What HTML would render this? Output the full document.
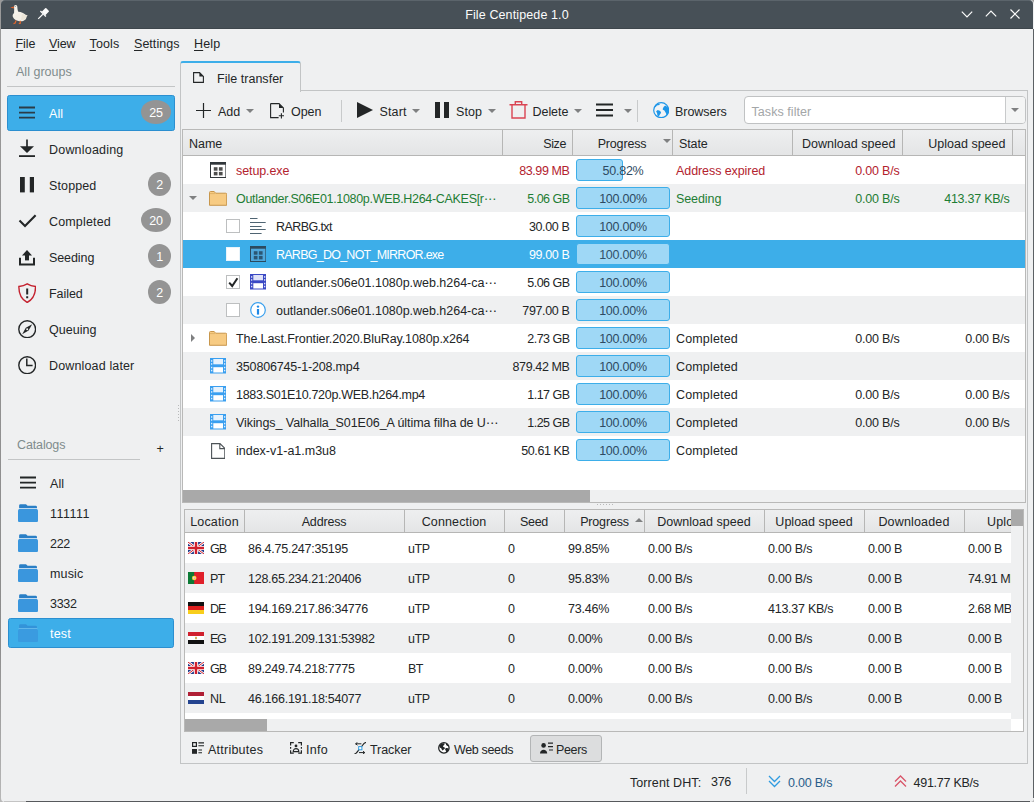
<!DOCTYPE html>
<html><head><meta charset="utf-8"><title>File Centipede 1.0</title>
<style>
html,body{margin:0;padding:0;background:#eff0f1;}
body{width:1034px;height:802px;overflow:hidden;font-family:"Liberation Sans","DejaVu Sans","Noto Sans CJK SC",sans-serif;font-size:12.5px;}
#win{position:relative;width:1034px;height:802px;overflow:hidden;background:#eff0f1;}
#win div,#win span.t,#win svg{position:absolute;box-sizing:border-box;}
.t{line-height:16px;height:16px;white-space:nowrap;font-size:12.5px;}
u{text-decoration:underline;text-underline-offset:2px;}

</style></head><body>
<div id="win">
<div style="left:0px;top:0px;width:1034px;height:802px;background:linear-gradient(#9a9a9a,#8c8c8c 80%,#b8b8b8);"></div>
<div style="left:1px;top:0px;width:1033px;height:802px;background:#eff0f1;border-radius:4px;"></div>
<div style="left:1px;top:0px;width:1032px;height:29px;background:#475057;border-radius:4px 4px 0 0;border-top:1px solid #5b646b;border-bottom:1px solid #3e464c;"></div>
<span class="t" style="left:317px;width:400px;text-align:center;top:7px;color:#fcfcfc;letter-spacing:0.119px;">File Centipede 1.0</span>
<svg style="left:960px;top:8px" width="14" height="12" viewBox="0 0 14 12"><path d="M1.8 3.6 L7 8.8 L12.2 3.6" fill="none" stroke="#fcfcfc" stroke-width="1.2"/></svg>
<svg style="left:984px;top:8px" width="14" height="12" viewBox="0 0 14 12"><path d="M1.8 8.4 L7 3.2 L12.2 8.4" fill="none" stroke="#fcfcfc" stroke-width="1.2"/></svg>
<svg style="left:1009px;top:8px" width="12" height="12" viewBox="0 0 12 12"><path d="M1.5 1.5 L10.5 10.5 M10.5 1.5 L1.5 10.5" fill="none" stroke="#fcfcfc" stroke-width="1.2"/></svg>
<svg style="left:9px;top:3px" width="20" height="22" viewBox="0 0 20 22"><ellipse cx="10.5" cy="13.5" rx="7" ry="4.6" fill="#f3efe6" transform="rotate(12 10.5 13.5)"/>
<path d="M5 3.5 C5 1.5 8 1.2 8.3 3.5 C8.5 6 8.6 8 10 10 L5.5 13 C4.5 10 5.6 7 5 3.5Z" fill="#f6f3ec"/>
<path d="M13 11 L18.6 12.2 L16 16.5 L12 17Z" fill="#ebe5d8"/>
<path d="M1.2 4.6 L4.9 3.6 L4.9 5.6 Z" fill="#e8622a"/>
<path d="M7 17.5 L6.2 20 L4.5 20.6 M11.3 17.8 L11.3 20.2 L9.8 20.6" stroke="#e0652c" stroke-width="1.2" fill="none"/>
<circle cx="6.2" cy="3.3" r="0.5" fill="#555"/></svg>
<svg style="left:37px;top:7px" width="13" height="13" viewBox="0 0 13 13"><g transform="rotate(45 6.5 6.5)"><rect x="4" y="0.8" width="5" height="5.8" rx="0.8" fill="#fcfcfc"/><rect x="2.6" y="6.3" width="7.8" height="1.3" fill="#fcfcfc"/><rect x="6" y="7.5" width="1.1" height="6.5" fill="#fcfcfc"/></g></svg>
<span class="t" style="left:15.5px;top:36px;color:#232627;letter-spacing:-0.043px;"><u>F</u>ile</span>
<span class="t" style="left:49px;top:36px;color:#232627;letter-spacing:-0.086px;"><u>V</u>iew</span>
<span class="t" style="left:89.5px;top:36px;color:#232627;letter-spacing:0.141px;"><u>T</u>ools</span>
<span class="t" style="left:134px;top:36px;color:#232627;letter-spacing:0.035px;"><u>S</u>ettings</span>
<span class="t" style="left:194px;top:36px;color:#232627;letter-spacing:0.133px;"><u>H</u>elp</span>
<span class="t" style="left:16px;top:64px;color:#7f8c8d;letter-spacing:0.013px;">All groups</span>
<div style="left:7px;top:86px;width:168px;height:1px;background:#c3c5c6;"></div>
<div style="left:7px;top:95px;width:168px;height:36px;background:#3daee9;border:1px solid #2b8fd0;border-radius:2.5px;"></div>
<svg style="left:19px;top:106px" width="16.4" height="13" viewBox="0 0 16.4 13"><path d="M0 1.5H16.4M0 6.6H16.4M0 11.7H16.4" stroke="#2b3c48" stroke-width="1.8"/></svg>
<span class="t" style="left:49px;top:106px;color:#ffffff;letter-spacing:0.073px;">All</span>
<div style="left:141px;top:100px;width:30px;height:24px;background:#949494;border-radius:50%;"></div>
<span class="t" style="left:-44.0px;width:400px;text-align:center;top:104.5px;color:#ffffff;letter-spacing:-0.289px;">25</span>
<span class="t" style="left:49px;top:142px;color:#232627;letter-spacing:0.202px;">Downloading</span>
<span class="t" style="left:49px;top:178px;color:#232627;letter-spacing:0.121px;">Stopped</span>
<div style="left:148px;top:172px;width:23px;height:24px;background:#949494;border-radius:50%;"></div>
<span class="t" style="left:-40.5px;width:400px;text-align:center;top:176.5px;color:#ffffff;letter-spacing:-0.281px;">2</span>
<span class="t" style="left:49px;top:214px;color:#232627;letter-spacing:0.155px;">Completed</span>
<div style="left:141px;top:208px;width:30px;height:24px;background:#949494;border-radius:50%;"></div>
<span class="t" style="left:-44.0px;width:400px;text-align:center;top:212.5px;color:#ffffff;letter-spacing:-0.289px;">20</span>
<span class="t" style="left:49px;top:250px;color:#232627;letter-spacing:-0.085px;">Seeding</span>
<div style="left:148px;top:244px;width:23px;height:24px;background:#949494;border-radius:50%;"></div>
<span class="t" style="left:-40.5px;width:400px;text-align:center;top:248.5px;color:#ffffff;letter-spacing:-0.281px;">1</span>
<span class="t" style="left:49px;top:286px;color:#232627;letter-spacing:-0.052px;">Failed</span>
<div style="left:148px;top:280px;width:23px;height:24px;background:#949494;border-radius:50%;"></div>
<span class="t" style="left:-40.5px;width:400px;text-align:center;top:284.5px;color:#ffffff;letter-spacing:-0.281px;">2</span>
<span class="t" style="left:49px;top:322px;color:#232627;letter-spacing:0.036px;">Queuing</span>
<span class="t" style="left:49px;top:358px;color:#232627;letter-spacing:0.146px;">Download later</span>
<svg style="left:19px;top:139px" width="16" height="19" viewBox="0 0 16 19"><path d="M8 0.4V9" stroke="#232627" stroke-width="1.7"/><path d="M1 7.2 H15 L8 14Z" fill="#232627"/><path d="M0 17.1H16" stroke="#232627" stroke-width="1.8"/></svg>
<svg style="left:19.7px;top:177.2px" width="14.6" height="15.4" viewBox="0 0 14.6 15.4"><rect x="0" y="0" width="4.8" height="15.4" fill="#232627"/><rect x="9.8" y="0" width="4.8" height="15.4" fill="#232627"/></svg>
<svg style="left:17.5px;top:213px" width="19" height="15" viewBox="0 0 19 15"><path d="M1.5 7.6 L7 13 L17.6 2.2" fill="none" stroke="#232627" stroke-width="2.1"/></svg>
<svg style="left:19px;top:249.5px" width="16" height="16" viewBox="0 0 16 16"><path d="M8 0 L13 5.4 H3Z" fill="#232627"/><rect x="6" y="5" width="4" height="5.4" fill="#232627"/><path d="M1 7.8V14.4H15V7.8" fill="none" stroke="#232627" stroke-width="2"/></svg>
<svg style="left:17.9px;top:282.8px" width="18.4" height="20.4" viewBox="0 0 18.4 20.4"><path d="M9.2 0.9 C6.6 2.6 4 3.3 0.9 3.5 C0.7 11 2.6 16 9.2 19.5 C15.8 16 17.7 11 17.5 3.5 C14.4 3.3 11.8 2.6 9.2 0.9Z" fill="none" stroke="#c4222f" stroke-width="1.4"/><path d="M9.2 5.4V11.6M9.2 13.2V15.2" stroke="#232627" stroke-width="2"/></svg>
<svg style="left:17.9px;top:319.8px" width="18.4" height="18.4" viewBox="0 0 18.4 18.4"><circle cx="9.2" cy="9.2" r="8.4" fill="none" stroke="#232627" stroke-width="1.4"/><path d="M14.2 4.2 L10.6 10.6 L4.2 14.2 L7.8 7.8Z" fill="#232627"/><circle cx="9.2" cy="9.2" r="1" fill="#eff0f1"/></svg>
<svg style="left:17.9px;top:355.8px" width="18.4" height="18.4" viewBox="0 0 18.4 18.4"><circle cx="9.2" cy="9.2" r="8.4" fill="none" stroke="#232627" stroke-width="1.4"/><path d="M8.8 2.4V9.6H14.6" fill="none" stroke="#232627" stroke-width="1.5"/></svg>
<span class="t" style="left:17px;top:437px;color:#7f8c8d;letter-spacing:-0.131px;">Catalogs</span>
<span class="t" style="left:156.5px;top:441px;color:#232627;letter-spacing:-0.641px;">+</span>
<div style="left:8px;top:459px;width:132px;height:1px;background:#c3c5c6;"></div>
<svg style="left:20px;top:476px" width="16.4" height="13" viewBox="0 0 16.4 13"><path d="M0 1.5H16.4M0 6.6H16.4M0 11.7H16.4" stroke="#232627" stroke-width="1.8"/></svg>
<div style="left:8px;top:618px;width:166px;height:30px;background:#3daee9;border:1px solid #2b8fd0;border-radius:2.5px;"></div>
<span class="t" style="left:50px;top:476px;color:#232627;letter-spacing:0.073px;">All</span>
<span class="t" style="left:50px;top:506px;color:#232627;letter-spacing:0.482px;">111111</span>
<svg style="left:18px;top:503.8px" width="20" height="18.2" viewBox="0 0 20 18.2"><path d="M1.1 1.6 Q1.1 0.2 2.5 0.2 H8 L9.6 1.8 H17.6 Q19 1.8 19 3.2 V6 H1.1Z" fill="#2a7fc6"/><rect x="0.6" y="4.2" width="18.8" height="1.2" fill="#e4eff9"/><rect x="0" y="5" width="20" height="13.2" rx="1.6" fill="#3a96dd"/></svg>
<span class="t" style="left:50px;top:536px;color:#232627;letter-spacing:-0.292px;">222</span>
<svg style="left:18px;top:533.8px" width="20" height="18.2" viewBox="0 0 20 18.2"><path d="M1.1 1.6 Q1.1 0.2 2.5 0.2 H8 L9.6 1.8 H17.6 Q19 1.8 19 3.2 V6 H1.1Z" fill="#2a7fc6"/><rect x="0.6" y="4.2" width="18.8" height="1.2" fill="#e4eff9"/><rect x="0" y="5" width="20" height="13.2" rx="1.6" fill="#3a96dd"/></svg>
<span class="t" style="left:50px;top:566px;color:#232627;letter-spacing:0.156px;">music</span>
<svg style="left:18px;top:563.8px" width="20" height="18.2" viewBox="0 0 20 18.2"><path d="M1.1 1.6 Q1.1 0.2 2.5 0.2 H8 L9.6 1.8 H17.6 Q19 1.8 19 3.2 V6 H1.1Z" fill="#2a7fc6"/><rect x="0.6" y="4.2" width="18.8" height="1.2" fill="#e4eff9"/><rect x="0" y="5" width="20" height="13.2" rx="1.6" fill="#3a96dd"/></svg>
<span class="t" style="left:50px;top:596px;color:#232627;letter-spacing:-0.293px;">3332</span>
<svg style="left:18px;top:593.8px" width="20" height="18.2" viewBox="0 0 20 18.2"><path d="M1.1 1.6 Q1.1 0.2 2.5 0.2 H8 L9.6 1.8 H17.6 Q19 1.8 19 3.2 V6 H1.1Z" fill="#2a7fc6"/><rect x="0.6" y="4.2" width="18.8" height="1.2" fill="#e4eff9"/><rect x="0" y="5" width="20" height="13.2" rx="1.6" fill="#3a96dd"/></svg>
<span class="t" style="left:50px;top:626px;color:#ffffff;letter-spacing:0.180px;">test</span>
<svg style="left:18px;top:623.8px" width="20" height="18.2" viewBox="0 0 20 18.2"><path d="M1.1 1.6 Q1.1 0.2 2.5 0.2 H8 L9.6 1.8 H17.6 Q19 1.8 19 3.2 V6 H1.1Z" fill="#3393d9"/><rect x="0.6" y="4.2" width="18.8" height="1.2" fill="#6fc0ee"/><rect x="0" y="5" width="20" height="13.2" rx="1.6" fill="#3a9be0"/></svg>
<div style="left:178px;top:405px;width:1px;height:1px;background:#b8b9ba;"></div>
<div style="left:178px;top:408px;width:1px;height:1px;background:#b8b9ba;"></div>
<div style="left:178px;top:411px;width:1px;height:1px;background:#b8b9ba;"></div>
<div style="left:178px;top:414px;width:1px;height:1px;background:#b8b9ba;"></div>
<div style="left:178px;top:417px;width:1px;height:1px;background:#b8b9ba;"></div>
<div style="left:178px;top:420px;width:1px;height:1px;background:#b8b9ba;"></div>
<div style="left:180px;top:90px;width:848px;height:674px;border:1px solid #c2c4c5;background:#eff0f1;"></div>
<div style="left:180px;top:61px;width:121px;height:31px;background:#eff0f1;border:1px solid #c2c4c5;border-bottom:none;border-top:2px solid #3daee9;border-radius:3px 3px 0 0;"></div>
<svg style="left:193px;top:72px" width="11" height="11" viewBox="0 0 11 11"><path d="M0.6 0.6 H6.6 L10.4 4.4 V10.4 H0.6Z" fill="none" stroke="#232627" stroke-width="1.1"/><path d="M6.4 0.6 L10.4 4.6 H6.4Z" fill="#232627"/></svg>
<span class="t" style="left:217px;top:71px;color:#232627;letter-spacing:0.023px;">File transfer</span>
<svg style="left:196px;top:103px" width="15" height="15" viewBox="0 0 15 15"><path d="M7.5 0V15M0 7.5H15" stroke="#232627" stroke-width="1.2"/></svg>
<span class="t" style="left:218px;top:103.5px;color:#232627;letter-spacing:-0.021px;">Add</span>
<svg style="left:246px;top:108.5px" width="8" height="4" viewBox="0 0 8 4"><path d="M0 0H8L4 4Z" fill="#7f8081"/></svg>
<svg style="left:270px;top:102.5px" width="15" height="16" viewBox="0 0 15 16"><path d="M0.6 0.6 H9 L13.4 5 V9.6 M8.6 14.6 H0.6 V0.6" fill="none" stroke="#232627" stroke-width="1.1"/><path d="M9 0.6 L13.4 5 H9Z" fill="#232627"/><path d="M11.4 10.2V15.4M8.8 12.8H14" stroke="#232627" stroke-width="1.1"/></svg>
<span class="t" style="left:291px;top:103.5px;color:#232627;letter-spacing:-0.070px;">Open</span>
<div style="left:341px;top:100px;width:1px;height:22px;background:#c8cacb;"></div>
<svg style="left:357px;top:102px" width="16" height="16" viewBox="0 0 16 16"><path d="M0 0 L16 8 L0 16Z" fill="#232627"/></svg>
<span class="t" style="left:379.5px;top:103.5px;color:#232627;letter-spacing:0.122px;">Start</span>
<svg style="left:412px;top:108.5px" width="8" height="4" viewBox="0 0 8 4"><path d="M0 0H8L4 4Z" fill="#7f8081"/></svg>
<svg style="left:435px;top:102px" width="14" height="16" viewBox="0 0 14 16"><rect x="0" y="0" width="5" height="16" fill="#232627"/><rect x="9" y="0" width="5" height="16" fill="#232627"/></svg>
<span class="t" style="left:456px;top:103.5px;color:#232627;letter-spacing:0.043px;">Stop</span>
<svg style="left:487.5px;top:108.5px" width="8" height="4" viewBox="0 0 8 4"><path d="M0 0H8L4 4Z" fill="#7f8081"/></svg>
<svg style="left:509px;top:101px" width="19" height="18" viewBox="0 0 19 18"><path d="M0.5 3.8H18.5M6.3 3.5V0.8H12.7V3.5M3 4V17H16V4" fill="none" stroke="#da4453" stroke-width="1.4"/></svg>
<span class="t" style="left:532.5px;top:103.5px;color:#232627;letter-spacing:-0.052px;">Delete</span>
<svg style="left:573.5px;top:108.5px" width="8" height="4" viewBox="0 0 8 4"><path d="M0 0H8L4 4Z" fill="#7f8081"/></svg>
<svg style="left:595.5px;top:102.5px" width="17" height="14" viewBox="0 0 17 14"><path d="M0 1.5H17M0 7H17M0 12.5H17" stroke="#232627" stroke-width="2"/></svg>
<svg style="left:623.5px;top:108.5px" width="8" height="4" viewBox="0 0 8 4"><path d="M0 0H8L4 4Z" fill="#7f8081"/></svg>
<div style="left:637px;top:100px;width:1px;height:22px;background:#c8cacb;"></div>
<svg style="left:652.8px;top:101.8px" width="16.4" height="16.4" viewBox="0 0 16.4 16.4"><circle cx="8.2" cy="8.2" r="7.5" fill="#f1f4f6" stroke="#1e96e8" stroke-width="1.2"/><path d="M1.6 5 L2.6 3 L4.8 1.7 L7 1.9 L6.2 2.9 L3.9 3.6 L2.6 5.2Z M9.7 7 L10.6 5 L12.2 3.5 L13.7 4.6 L15.3 5.8 L15.9 8.9 L15.3 11.6 L13.7 13.9 L13 11.2 L11.4 8.5 L9.9 7.7Z M3.1 9.3 L4.8 8.1 L7.2 9.1 L8.1 10.8 L6.8 12.8 L5.6 14.7 L4.4 13.5 L4.1 11.2Z" fill="#1e96e8"/></svg>
<span class="t" style="left:675px;top:103.5px;color:#232627;letter-spacing:-0.043px;">Browsers</span>
<div style="left:744px;top:96px;width:282px;height:28px;background:#ffffff;border:1px solid #c0c2c3;border-radius:4px;"></div>
<div style="left:1005px;top:97px;width:1px;height:26px;background:#c8cacb;"></div>
<div style="left:1006px;top:97px;width:19px;height:26px;background:#f4f5f5;border-radius:0 3px 3px 0;"></div>
<span class="t" style="left:751.5px;top:103.5px;color:#a3a6a8;letter-spacing:0.061px;">Tasks filter</span>
<svg style="left:1010.5px;top:108px" width="8" height="4" viewBox="0 0 8 4"><path d="M0 0H8L4 4Z" fill="#7f8081"/></svg>
<div style="left:182px;top:129px;width:844px;height:374px;border:1px solid #b9b9b8;background:#ffffff;"></div>
<div style="left:183px;top:130px;width:842px;height:25.5px;background:linear-gradient(#eeeff0,#e4e5e6);border-bottom:1px solid #b6b6b5;"></div>
<div style="left:502px;top:130px;width:1px;height:25px;background:#b6b6b5;"></div>
<div style="left:572px;top:130px;width:1px;height:25px;background:#b6b6b5;"></div>
<div style="left:672px;top:130px;width:1px;height:25px;background:#b6b6b5;"></div>
<div style="left:792px;top:130px;width:1px;height:25px;background:#b6b6b5;"></div>
<div style="left:902px;top:130px;width:1px;height:25px;background:#b6b6b5;"></div>
<div style="left:1012px;top:130px;width:1px;height:25px;background:#b6b6b5;"></div>
<span class="t" style="left:189px;top:135.5px;color:#232627;letter-spacing:-0.035px;">Name</span>
<span class="t" style="right:468px;top:135.5px;color:#232627;letter-spacing:-0.414px;">Size</span>
<span class="t" style="left:422px;width:400px;text-align:center;top:135.5px;color:#232627;letter-spacing:-0.182px;">Progress</span>
<svg style="left:663px;top:139px" width="8" height="4" viewBox="0 0 8 4"><path d="M0 0H8L4 4Z" fill="#7f8081"/></svg>
<span class="t" style="left:679px;top:135.5px;color:#232627;letter-spacing:-0.109px;">State</span>
<span class="t" style="right:138.5px;top:135.5px;color:#232627;letter-spacing:0.033px;">Download speed</span>
<span class="t" style="right:28.5px;top:135.5px;color:#232627;letter-spacing:0.009px;">Upload speed</span>
<svg style="left:209.7px;top:162.3px" width="16.4" height="16" viewBox="0 0 16.4 16"><rect x="0.5" y="0.5" width="15.4" height="15" fill="#ffffff" stroke="#31363b" stroke-width="1"/><rect x="0.5" y="0.5" width="15.4" height="2.2" fill="#31363b"/><rect x="3.8" y="5.2" width="3.7" height="3.5" fill="#4d4d4d"/><rect x="8.9" y="5.2" width="3.7" height="3.5" fill="#4d4d4d"/><rect x="3.8" y="9.9" width="3.7" height="3.5" fill="#4d4d4d"/><rect x="8.9" y="9.9" width="3.7" height="3.5" fill="#4d4d4d"/></svg>
<span class="t" style="left:236px;top:163px;color:#b3222e;letter-spacing:-0.092px;">setup.exe</span>
<span class="t" style="right:464.5px;top:163px;color:#b3222e;letter-spacing:-0.402px;">83.99 MB</span>
<div style="left:576px;top:159px;width:46.7px;height:22px;background:#9fd8f6;border:1px solid #3daee9;border-radius:3px;"></div>
<span class="t" style="left:423px;width:400px;text-align:center;top:163px;color:#2e4a62;letter-spacing:-0.229px;">50.82%</span>
<span class="t" style="left:676px;top:163px;color:#b3222e;letter-spacing:-0.078px;">Address expired</span>
<span class="t" style="right:134.5px;top:163px;color:#b3222e;letter-spacing:-0.207px;">0.00 B/s</span>
<div style="left:183px;top:184px;width:842px;height:28px;background:#eff0f1;"></div>
<svg style="left:189px;top:196px" width="8" height="4" viewBox="0 0 8 4"><path d="M0 0H8L4 4Z" fill="#7f8081"/></svg>
<svg style="left:209.0px;top:190.6px" width="18.2" height="15" viewBox="0 0 18.2 15"><path d="M0.5 14.3 V1.5 Q0.5 0.5 1.5 0.5 H5.2 L6.6 2.2 H16.7 Q17.7 2.2 17.7 3.2 V14.3Z" fill="#f7cb83" stroke="#c8964a" stroke-width="1"/><path d="M0.8 2.6 H6" stroke="#d9a95a" stroke-width="0.7" fill="none"/></svg>
<span class="t" style="left:236px;top:191px;color:#1e7d34;letter-spacing:-0.313px;">Outlander.S06E01.1080p.WEB.H264-CAKES[r⋯</span>
<span class="t" style="right:464.5px;top:191px;color:#1e7d34;letter-spacing:-0.529px;">5.06 GB</span>
<div style="left:576px;top:187px;width:94px;height:22px;background:#9fd8f6;border:1px solid #3daee9;border-radius:3px;"></div>
<span class="t" style="left:423px;width:400px;text-align:center;top:191px;color:#2e4a62;letter-spacing:-0.237px;">100.00%</span>
<span class="t" style="left:676px;top:191px;color:#1e7d34;letter-spacing:-0.085px;">Seeding</span>
<span class="t" style="right:134.5px;top:191px;color:#1e7d34;letter-spacing:-0.207px;">0.00 B/s</span>
<span class="t" style="right:24.5px;top:191px;color:#1e7d34;letter-spacing:-0.257px;">413.37 KB/s</span>
<div style="left:226px;top:219px;width:14px;height:14px;background:#ffffff;border:1px solid #bdbfc0;"></div>
<svg style="left:250.0px;top:218px" width="16" height="16" viewBox="0 0 16 16"><path d="M0 0.5H7.5M0 4.5H15.7M0 8.5H11.6M0 11.5H15.7M0 15.5H11.6" stroke="#4f6472" stroke-width="1"/></svg>
<span class="t" style="left:276px;top:219px;color:#232627;letter-spacing:-0.585px;">RARBG.txt</span>
<span class="t" style="right:464.5px;top:219px;color:#232627;letter-spacing:-0.362px;">30.00 B</span>
<div style="left:576px;top:215px;width:94px;height:22px;background:#9fd8f6;border:1px solid #3daee9;border-radius:3px;"></div>
<span class="t" style="left:423px;width:400px;text-align:center;top:219px;color:#2e4a62;letter-spacing:-0.237px;">100.00%</span>
<div style="left:183px;top:240px;width:842px;height:28px;background:#3daee9;"></div>
<div style="left:226px;top:247px;width:14px;height:14px;background:#ffffff;border:1px solid #e8f4fb;"></div>
<svg style="left:249.7px;top:246.3px" width="16.4" height="16" viewBox="0 0 16.4 16"><rect x="0.5" y="0.5" width="15.4" height="15" fill="#4fa8dc" stroke="#2c4a5e" stroke-width="1"/><rect x="0.5" y="0.5" width="15.4" height="2.2" fill="#2c4a5e"/><rect x="3.8" y="5.2" width="3.7" height="3.5" fill="#2b5673"/><rect x="8.9" y="5.2" width="3.7" height="3.5" fill="#2b5673"/><rect x="3.8" y="9.9" width="3.7" height="3.5" fill="#2b5673"/><rect x="8.9" y="9.9" width="3.7" height="3.5" fill="#2b5673"/></svg>
<span class="t" style="left:276px;top:247px;color:#ffffff;letter-spacing:-0.749px;">RARBG_DO_NOT_MIRROR.exe</span>
<span class="t" style="right:464.5px;top:247px;color:#ffffff;letter-spacing:-0.362px;">99.00 B</span>
<div style="left:576px;top:243px;width:94px;height:22px;background:#9fd8f6;border:1px solid #3daee9;border-radius:3px;"></div>
<span class="t" style="left:423px;width:400px;text-align:center;top:247px;color:#31516b;letter-spacing:-0.237px;">100.00%</span>
<div style="left:226px;top:275px;width:14px;height:14px;background:#ffffff;border:1px solid #bdbfc0;"></div>
<svg style="left:228px;top:276.5px" width="11" height="11" viewBox="0 0 11 11"><path d="M1.2 5.6 L4.2 9 L9.4 1.2" fill="none" stroke="#232627" stroke-width="2"/></svg>
<svg style="left:249.7px;top:274.4px" width="16.3" height="15.5" viewBox="0 0 16.3 15.5"><rect x="0" y="0" width="16.3" height="15.5" fill="#3b49c4"/><rect x="3.3" y="1" width="9.7" height="5.3" fill="#dfe2f7"/><rect x="3.3" y="9.2" width="9.7" height="5.3" fill="#ffffff"/><rect x="1.0" y="2.2" width="1.3" height="1.5" fill="#ffffff" opacity="0.85"/><rect x="1.0" y="5.2" width="1.3" height="1.5" fill="#ffffff" opacity="0.85"/><rect x="1.0" y="8.8" width="1.3" height="1.5" fill="#ffffff" opacity="0.85"/><rect x="1.0" y="11.8" width="1.3" height="1.5" fill="#ffffff" opacity="0.85"/><rect x="14.0" y="2.2" width="1.3" height="1.5" fill="#ffffff" opacity="0.85"/><rect x="14.0" y="5.2" width="1.3" height="1.5" fill="#ffffff" opacity="0.85"/><rect x="14.0" y="8.8" width="1.3" height="1.5" fill="#ffffff" opacity="0.85"/><rect x="14.0" y="11.8" width="1.3" height="1.5" fill="#ffffff" opacity="0.85"/></svg>
<span class="t" style="left:276px;top:275px;color:#232627;letter-spacing:-0.025px;">outlander.s06e01.1080p.web.h264-ca⋯</span>
<span class="t" style="right:464.5px;top:275px;color:#232627;letter-spacing:-0.529px;">5.06 GB</span>
<div style="left:576px;top:271px;width:94px;height:22px;background:#9fd8f6;border:1px solid #3daee9;border-radius:3px;"></div>
<span class="t" style="left:423px;width:400px;text-align:center;top:275px;color:#2e4a62;letter-spacing:-0.237px;">100.00%</span>
<div style="left:183px;top:296px;width:842px;height:28px;background:#eff0f1;"></div>
<div style="left:226px;top:303px;width:14px;height:14px;background:#ffffff;border:1px solid #bdbfc0;"></div>
<svg style="left:250.0px;top:302.3px" width="16" height="16" viewBox="0 0 16 16"><circle cx="8" cy="8" r="7.3" fill="#ffffff" stroke="#3aa0ee" stroke-width="1.2"/><path d="M8 7V12.6" stroke="#1e88e5" stroke-width="2.2"/><circle cx="8" cy="4.6" r="1.2" fill="#1e88e5"/></svg>
<span class="t" style="left:276px;top:303px;color:#232627;letter-spacing:-0.025px;">outlander.s06e01.1080p.web.h264-ca⋯</span>
<span class="t" style="right:464.5px;top:303px;color:#232627;letter-spacing:-0.354px;">797.00 B</span>
<div style="left:576px;top:299px;width:94px;height:22px;background:#9fd8f6;border:1px solid #3daee9;border-radius:3px;"></div>
<span class="t" style="left:423px;width:400px;text-align:center;top:303px;color:#2e4a62;letter-spacing:-0.237px;">100.00%</span>
<svg style="left:191px;top:334px" width="4" height="8" viewBox="0 0 4 8"><path d="M0 0V8L4 4Z" fill="#7f8081"/></svg>
<svg style="left:209.0px;top:330.6px" width="18.2" height="15" viewBox="0 0 18.2 15"><path d="M0.5 14.3 V1.5 Q0.5 0.5 1.5 0.5 H5.2 L6.6 2.2 H16.7 Q17.7 2.2 17.7 3.2 V14.3Z" fill="#f7cb83" stroke="#c8964a" stroke-width="1"/><path d="M0.8 2.6 H6" stroke="#d9a95a" stroke-width="0.7" fill="none"/></svg>
<span class="t" style="left:236px;top:331px;color:#232627;letter-spacing:-0.099px;">The.Last.Frontier.2020.BluRay.1080p.x264</span>
<span class="t" style="right:464.5px;top:331px;color:#232627;letter-spacing:-0.529px;">2.73 GB</span>
<div style="left:576px;top:327px;width:94px;height:22px;background:#9fd8f6;border:1px solid #3daee9;border-radius:3px;"></div>
<span class="t" style="left:423px;width:400px;text-align:center;top:331px;color:#2e4a62;letter-spacing:-0.237px;">100.00%</span>
<span class="t" style="left:676px;top:331px;color:#232627;letter-spacing:0.155px;">Completed</span>
<span class="t" style="right:134.5px;top:331px;color:#232627;letter-spacing:-0.207px;">0.00 B/s</span>
<span class="t" style="right:24.5px;top:331px;color:#232627;letter-spacing:-0.207px;">0.00 B/s</span>
<div style="left:183px;top:352px;width:842px;height:28px;background:#eff0f1;"></div>
<svg style="left:209.7px;top:358.4px" width="16.3" height="15.5" viewBox="0 0 16.3 15.5"><rect x="0" y="0" width="16.3" height="15.5" fill="#3a9ff0"/><rect x="3.3" y="1" width="9.7" height="5.3" fill="#e6f2fd"/><rect x="3.3" y="9.2" width="9.7" height="5.3" fill="#ffffff"/><rect x="1.0" y="2.2" width="1.3" height="1.5" fill="#ffffff" opacity="0.85"/><rect x="1.0" y="5.2" width="1.3" height="1.5" fill="#ffffff" opacity="0.85"/><rect x="1.0" y="8.8" width="1.3" height="1.5" fill="#ffffff" opacity="0.85"/><rect x="1.0" y="11.8" width="1.3" height="1.5" fill="#ffffff" opacity="0.85"/><rect x="14.0" y="2.2" width="1.3" height="1.5" fill="#ffffff" opacity="0.85"/><rect x="14.0" y="5.2" width="1.3" height="1.5" fill="#ffffff" opacity="0.85"/><rect x="14.0" y="8.8" width="1.3" height="1.5" fill="#ffffff" opacity="0.85"/><rect x="14.0" y="11.8" width="1.3" height="1.5" fill="#ffffff" opacity="0.85"/></svg>
<span class="t" style="left:236px;top:359px;color:#232627;letter-spacing:-0.160px;">350806745-1-208.mp4</span>
<span class="t" style="right:464.5px;top:359px;color:#232627;letter-spacing:-0.391px;">879.42 MB</span>
<div style="left:576px;top:355px;width:94px;height:22px;background:#9fd8f6;border:1px solid #3daee9;border-radius:3px;"></div>
<span class="t" style="left:423px;width:400px;text-align:center;top:359px;color:#2e4a62;letter-spacing:-0.237px;">100.00%</span>
<span class="t" style="left:676px;top:359px;color:#232627;letter-spacing:0.155px;">Completed</span>
<svg style="left:209.7px;top:386.4px" width="16.3" height="15.5" viewBox="0 0 16.3 15.5"><rect x="0" y="0" width="16.3" height="15.5" fill="#3a9ff0"/><rect x="3.3" y="1" width="9.7" height="5.3" fill="#e6f2fd"/><rect x="3.3" y="9.2" width="9.7" height="5.3" fill="#ffffff"/><rect x="1.0" y="2.2" width="1.3" height="1.5" fill="#ffffff" opacity="0.85"/><rect x="1.0" y="5.2" width="1.3" height="1.5" fill="#ffffff" opacity="0.85"/><rect x="1.0" y="8.8" width="1.3" height="1.5" fill="#ffffff" opacity="0.85"/><rect x="1.0" y="11.8" width="1.3" height="1.5" fill="#ffffff" opacity="0.85"/><rect x="14.0" y="2.2" width="1.3" height="1.5" fill="#ffffff" opacity="0.85"/><rect x="14.0" y="5.2" width="1.3" height="1.5" fill="#ffffff" opacity="0.85"/><rect x="14.0" y="8.8" width="1.3" height="1.5" fill="#ffffff" opacity="0.85"/><rect x="14.0" y="11.8" width="1.3" height="1.5" fill="#ffffff" opacity="0.85"/></svg>
<span class="t" style="left:236px;top:387px;color:#232627;letter-spacing:-0.313px;">1883.S01E10.720p.WEB.h264.mp4</span>
<span class="t" style="right:464.5px;top:387px;color:#232627;letter-spacing:-0.529px;">1.17 GB</span>
<div style="left:576px;top:383px;width:94px;height:22px;background:#9fd8f6;border:1px solid #3daee9;border-radius:3px;"></div>
<span class="t" style="left:423px;width:400px;text-align:center;top:387px;color:#2e4a62;letter-spacing:-0.237px;">100.00%</span>
<span class="t" style="left:676px;top:387px;color:#232627;letter-spacing:0.155px;">Completed</span>
<span class="t" style="right:134.5px;top:387px;color:#232627;letter-spacing:-0.207px;">0.00 B/s</span>
<span class="t" style="right:24.5px;top:387px;color:#232627;letter-spacing:-0.207px;">0.00 B/s</span>
<div style="left:183px;top:408px;width:842px;height:28px;background:#eff0f1;"></div>
<svg style="left:209.7px;top:414.4px" width="16.3" height="15.5" viewBox="0 0 16.3 15.5"><rect x="0" y="0" width="16.3" height="15.5" fill="#3a9ff0"/><rect x="3.3" y="1" width="9.7" height="5.3" fill="#e6f2fd"/><rect x="3.3" y="9.2" width="9.7" height="5.3" fill="#ffffff"/><rect x="1.0" y="2.2" width="1.3" height="1.5" fill="#ffffff" opacity="0.85"/><rect x="1.0" y="5.2" width="1.3" height="1.5" fill="#ffffff" opacity="0.85"/><rect x="1.0" y="8.8" width="1.3" height="1.5" fill="#ffffff" opacity="0.85"/><rect x="1.0" y="11.8" width="1.3" height="1.5" fill="#ffffff" opacity="0.85"/><rect x="14.0" y="2.2" width="1.3" height="1.5" fill="#ffffff" opacity="0.85"/><rect x="14.0" y="5.2" width="1.3" height="1.5" fill="#ffffff" opacity="0.85"/><rect x="14.0" y="8.8" width="1.3" height="1.5" fill="#ffffff" opacity="0.85"/><rect x="14.0" y="11.8" width="1.3" height="1.5" fill="#ffffff" opacity="0.85"/></svg>
<span class="t" style="left:236px;top:415px;color:#232627;letter-spacing:-0.077px;">Vikings_ Valhalla_S01E06_A última filha de U⋯</span>
<span class="t" style="right:464.5px;top:415px;color:#232627;letter-spacing:-0.529px;">1.25 GB</span>
<div style="left:576px;top:411px;width:94px;height:22px;background:#9fd8f6;border:1px solid #3daee9;border-radius:3px;"></div>
<span class="t" style="left:423px;width:400px;text-align:center;top:415px;color:#2e4a62;letter-spacing:-0.237px;">100.00%</span>
<span class="t" style="left:676px;top:415px;color:#232627;letter-spacing:0.155px;">Completed</span>
<span class="t" style="right:134.5px;top:415px;color:#232627;letter-spacing:-0.207px;">0.00 B/s</span>
<span class="t" style="right:24.5px;top:415px;color:#232627;letter-spacing:-0.207px;">0.00 B/s</span>
<svg style="left:210.5px;top:442.5px" width="14.5" height="16" viewBox="0 0 14.5 16"><path d="M0.6 0.6 H9 L13.8 5.4 V15.4 H0.6Z M8.8 0.6 V5.6 H13.8" fill="#ffffff" stroke="#4d5357" stroke-width="1.1"/></svg>
<span class="t" style="left:236px;top:443px;color:#232627;letter-spacing:-0.002px;">index-v1-a1.m3u8</span>
<span class="t" style="right:464.5px;top:443px;color:#232627;letter-spacing:-0.391px;">50.61 KB</span>
<div style="left:576px;top:439px;width:94px;height:22px;background:#9fd8f6;border:1px solid #3daee9;border-radius:3px;"></div>
<span class="t" style="left:423px;width:400px;text-align:center;top:443px;color:#2e4a62;letter-spacing:-0.237px;">100.00%</span>
<span class="t" style="left:676px;top:443px;color:#232627;letter-spacing:0.155px;">Completed</span>
<div style="left:183px;top:490px;width:842px;height:12px;background:#eff0f1;"></div>
<div style="left:183px;top:490px;width:407px;height:12px;background:#a9a9a9;"></div>
<div style="left:597px;top:504px;width:1px;height:1px;background:#b8b9ba;"></div>
<div style="left:600px;top:504px;width:1px;height:1px;background:#b8b9ba;"></div>
<div style="left:603px;top:504px;width:1px;height:1px;background:#b8b9ba;"></div>
<div style="left:606px;top:504px;width:1px;height:1px;background:#b8b9ba;"></div>
<div style="left:609px;top:504px;width:1px;height:1px;background:#b8b9ba;"></div>
<div style="left:612px;top:504px;width:1px;height:1px;background:#b8b9ba;"></div>
<div style="left:184px;top:509px;width:840px;height:223px;border:1px solid #b9b9b8;background:#ffffff;"></div>
<div style="left:185px;top:510px;width:826px;height:23px;background:linear-gradient(#eeeff0,#e4e5e6);border-bottom:1px solid #b6b6b5;"></div>
<div style="left:244px;top:510px;width:1px;height:22px;background:#b6b6b5;"></div>
<div style="left:404px;top:510px;width:1px;height:22px;background:#b6b6b5;"></div>
<div style="left:504px;top:510px;width:1px;height:22px;background:#b6b6b5;"></div>
<div style="left:564px;top:510px;width:1px;height:22px;background:#b6b6b5;"></div>
<div style="left:644px;top:510px;width:1px;height:22px;background:#b6b6b5;"></div>
<div style="left:764px;top:510px;width:1px;height:22px;background:#b6b6b5;"></div>
<div style="left:864px;top:510px;width:1px;height:22px;background:#b6b6b5;"></div>
<div style="left:964px;top:510px;width:1px;height:22px;background:#b6b6b5;"></div>
<span class="t" style="left:14.5px;width:400px;text-align:center;top:513.5px;color:#232627;letter-spacing:0.170px;">Location</span>
<span class="t" style="left:124.0px;width:400px;text-align:center;top:513.5px;color:#232627;letter-spacing:-0.181px;">Address</span>
<span class="t" style="left:254.0px;width:400px;text-align:center;top:513.5px;color:#232627;letter-spacing:0.138px;">Connection</span>
<span class="t" style="left:334.0px;width:400px;text-align:center;top:513.5px;color:#232627;letter-spacing:-0.328px;">Seed</span>
<span class="t" style="left:404.5px;width:400px;text-align:center;top:513.5px;color:#232627;letter-spacing:-0.182px;">Progress</span>
<span class="t" style="left:504.0px;width:400px;text-align:center;top:513.5px;color:#232627;letter-spacing:0.033px;">Download speed</span>
<span class="t" style="left:614.0px;width:400px;text-align:center;top:513.5px;color:#232627;letter-spacing:0.009px;">Upload speed</span>
<span class="t" style="left:714.0px;width:400px;text-align:center;top:513.5px;color:#232627;letter-spacing:0.170px;">Downloaded</span>
<div style="left:964px;top:510px;width:47px;height:22px;overflow:hidden;">
<span class="t" style="left:-149.5px;width:400px;text-align:center;top:3.5px;color:#232627;letter-spacing:0.170px;">Uploaded</span>
</div>
<svg style="left:635px;top:517.5px" width="8" height="4" viewBox="0 0 8 4"><path d="M0 4H8L4 0Z" fill="#7f8081"/></svg>
<svg style="left:188px;top:542px" width="16" height="12" viewBox="0 0 16 12"><rect width="16" height="12" fill="#1f3a8a"/><path d="M0 0L16 12M16 0L0 12" stroke="#ffffff" stroke-width="2.6"/><path d="M0 0L16 12M16 0L0 12" stroke="#d0202e" stroke-width="1"/><path d="M8 0V12M0 6H16" stroke="#ffffff" stroke-width="4.2"/><path d="M8 0V12M0 6H16" stroke="#d0202e" stroke-width="2.4"/></svg>
<span class="t" style="left:210px;top:541px;color:#232627;letter-spacing:-0.953px;">GB</span>
<span class="t" style="left:248px;top:541px;color:#232627;letter-spacing:-0.256px;">86.4.75.247:35195</span>
<span class="t" style="left:408px;top:541px;color:#232627;letter-spacing:-0.375px;">uTP</span>
<span class="t" style="left:508px;top:541px;color:#232627;letter-spacing:-0.281px;">0</span>
<span class="t" style="left:568px;top:541px;color:#232627;letter-spacing:-0.229px;">99.85%</span>
<span class="t" style="left:648px;top:541px;color:#232627;letter-spacing:-0.207px;">0.00 B/s</span>
<span class="t" style="left:768px;top:541px;color:#232627;letter-spacing:-0.207px;">0.00 B/s</span>
<span class="t" style="left:868px;top:541px;color:#232627;letter-spacing:-0.375px;">0.00 B</span>
<div style="left:964px;top:533px;width:47px;height:30px;overflow:hidden;">
<span class="t" style="left:4px;top:8px;color:#232627;letter-spacing:-0.375px;">0.00 B</span>
</div>
<div style="left:185px;top:563px;width:826px;height:30px;background:#eff0f1;"></div>
<svg style="left:188px;top:572px" width="16" height="12" viewBox="0 0 16 12"><rect width="16" height="12" fill="#e0202a"/><rect width="6.2" height="12" fill="#0c7a35"/><circle cx="6.2" cy="6" r="2.3" fill="#f5d23a"/><circle cx="6.2" cy="6" r="1.2" fill="#f4f4f4"/><circle cx="6.2" cy="6" r="0.6" fill="#e0202a"/></svg>
<span class="t" style="left:210px;top:571px;color:#232627;letter-spacing:-0.758px;">PT</span>
<span class="t" style="left:248px;top:571px;color:#232627;letter-spacing:-0.259px;">128.65.234.21:20406</span>
<span class="t" style="left:408px;top:571px;color:#232627;letter-spacing:-0.375px;">uTP</span>
<span class="t" style="left:508px;top:571px;color:#232627;letter-spacing:-0.281px;">0</span>
<span class="t" style="left:568px;top:571px;color:#232627;letter-spacing:-0.229px;">95.83%</span>
<span class="t" style="left:648px;top:571px;color:#232627;letter-spacing:-0.207px;">0.00 B/s</span>
<span class="t" style="left:768px;top:571px;color:#232627;letter-spacing:-0.207px;">0.00 B/s</span>
<span class="t" style="left:868px;top:571px;color:#232627;letter-spacing:-0.375px;">0.00 B</span>
<div style="left:964px;top:563px;width:47px;height:30px;overflow:hidden;">
<span class="t" style="left:4px;top:8px;color:#232627;letter-spacing:-0.402px;">74.91 MB</span>
</div>
<svg style="left:188px;top:602px" width="16" height="12" viewBox="0 0 16 12"><rect width="16" height="4" fill="#111111"/><rect y="4" width="16" height="4" fill="#dd1f1f"/><rect y="8" width="16" height="4" fill="#f8ce1c"/></svg>
<span class="t" style="left:210px;top:601px;color:#232627;letter-spacing:-1.023px;">DE</span>
<span class="t" style="left:248px;top:601px;color:#232627;letter-spacing:-0.261px;">194.169.217.86:34776</span>
<span class="t" style="left:408px;top:601px;color:#232627;letter-spacing:-0.375px;">uTP</span>
<span class="t" style="left:508px;top:601px;color:#232627;letter-spacing:-0.281px;">0</span>
<span class="t" style="left:568px;top:601px;color:#232627;letter-spacing:-0.229px;">73.46%</span>
<span class="t" style="left:648px;top:601px;color:#232627;letter-spacing:-0.207px;">0.00 B/s</span>
<span class="t" style="left:768px;top:601px;color:#232627;letter-spacing:-0.257px;">413.37 KB/s</span>
<span class="t" style="left:868px;top:601px;color:#232627;letter-spacing:-0.375px;">0.00 B</span>
<div style="left:964px;top:593px;width:47px;height:30px;overflow:hidden;">
<span class="t" style="left:4px;top:8px;color:#232627;letter-spacing:-0.417px;">2.68 MB</span>
</div>
<div style="left:185px;top:623px;width:826px;height:30px;background:#eff0f1;"></div>
<svg style="left:188px;top:632px" width="16" height="12" viewBox="0 0 16 12"><rect width="16" height="4" fill="#d0202e"/><rect y="4" width="16" height="4" fill="#ffffff"/><rect y="8" width="16" height="4" fill="#111111"/><rect x="7.2" y="4.8" width="1.6" height="2.4" fill="#c8a33a"/></svg>
<span class="t" style="left:210px;top:631px;color:#232627;letter-spacing:-1.359px;">EG</span>
<span class="t" style="left:248px;top:631px;color:#232627;letter-spacing:-0.262px;">102.191.209.131:53982</span>
<span class="t" style="left:408px;top:631px;color:#232627;letter-spacing:-0.375px;">uTP</span>
<span class="t" style="left:508px;top:631px;color:#232627;letter-spacing:-0.281px;">0</span>
<span class="t" style="left:568px;top:631px;color:#232627;letter-spacing:-0.216px;">0.00%</span>
<span class="t" style="left:648px;top:631px;color:#232627;letter-spacing:-0.207px;">0.00 B/s</span>
<span class="t" style="left:768px;top:631px;color:#232627;letter-spacing:-0.207px;">0.00 B/s</span>
<span class="t" style="left:868px;top:631px;color:#232627;letter-spacing:-0.375px;">0.00 B</span>
<div style="left:964px;top:623px;width:47px;height:30px;overflow:hidden;">
<span class="t" style="left:4px;top:8px;color:#232627;letter-spacing:-0.375px;">0.00 B</span>
</div>
<svg style="left:188px;top:662px" width="16" height="12" viewBox="0 0 16 12"><rect width="16" height="12" fill="#1f3a8a"/><path d="M0 0L16 12M16 0L0 12" stroke="#ffffff" stroke-width="2.6"/><path d="M0 0L16 12M16 0L0 12" stroke="#d0202e" stroke-width="1"/><path d="M8 0V12M0 6H16" stroke="#ffffff" stroke-width="4.2"/><path d="M8 0V12M0 6H16" stroke="#d0202e" stroke-width="2.4"/></svg>
<span class="t" style="left:210px;top:661px;color:#232627;letter-spacing:-0.953px;">GB</span>
<span class="t" style="left:248px;top:661px;color:#232627;letter-spacing:-0.257px;">89.249.74.218:7775</span>
<span class="t" style="left:408px;top:661px;color:#232627;letter-spacing:-0.617px;">BT</span>
<span class="t" style="left:508px;top:661px;color:#232627;letter-spacing:-0.281px;">0</span>
<span class="t" style="left:568px;top:661px;color:#232627;letter-spacing:-0.216px;">0.00%</span>
<span class="t" style="left:648px;top:661px;color:#232627;letter-spacing:-0.207px;">0.00 B/s</span>
<span class="t" style="left:768px;top:661px;color:#232627;letter-spacing:-0.207px;">0.00 B/s</span>
<span class="t" style="left:868px;top:661px;color:#232627;letter-spacing:-0.375px;">0.00 B</span>
<div style="left:964px;top:653px;width:47px;height:30px;overflow:hidden;">
<span class="t" style="left:4px;top:8px;color:#232627;letter-spacing:-0.375px;">0.00 B</span>
</div>
<div style="left:185px;top:683px;width:826px;height:30px;background:#eff0f1;"></div>
<svg style="left:188px;top:692px" width="16" height="12" viewBox="0 0 16 12"><rect width="16" height="4" fill="#b01f35"/><rect y="4" width="16" height="4" fill="#ffffff"/><rect y="8" width="16" height="4" fill="#23438f"/></svg>
<span class="t" style="left:210px;top:691px;color:#232627;letter-spacing:-0.391px;">NL</span>
<span class="t" style="left:248px;top:691px;color:#232627;letter-spacing:-0.259px;">46.166.191.18:54077</span>
<span class="t" style="left:408px;top:691px;color:#232627;letter-spacing:-0.375px;">uTP</span>
<span class="t" style="left:508px;top:691px;color:#232627;letter-spacing:-0.281px;">0</span>
<span class="t" style="left:568px;top:691px;color:#232627;letter-spacing:-0.216px;">0.00%</span>
<span class="t" style="left:648px;top:691px;color:#232627;letter-spacing:-0.207px;">0.00 B/s</span>
<span class="t" style="left:768px;top:691px;color:#232627;letter-spacing:-0.207px;">0.00 B/s</span>
<span class="t" style="left:868px;top:691px;color:#232627;letter-spacing:-0.375px;">0.00 B</span>
<div style="left:964px;top:683px;width:47px;height:30px;overflow:hidden;">
<span class="t" style="left:4px;top:8px;color:#232627;letter-spacing:-0.375px;">0.00 B</span>
</div>
<div style="left:1011px;top:510px;width:12px;height:209px;background:#eff0f1;"></div>
<div style="left:1011px;top:510px;width:12px;height:16px;background:#a9a9a9;"></div>
<div style="left:185px;top:719px;width:826px;height:12px;background:#eff0f1;"></div>
<div style="left:185px;top:719px;width:82px;height:12px;background:#a9a9a9;"></div>
<div style="left:1012px;top:720px;width:11px;height:11px;background:#ffffff;"></div>
<svg style="left:192px;top:742px" width="12" height="12" viewBox="0 0 12 12"><rect x="0.6" y="0.6" width="3.8" height="3.8" fill="none" stroke="#232627" stroke-width="1.2"/><rect x="0" y="7" width="5" height="4.8" fill="#232627"/><path d="M6.4 0.9H12M6.4 3.7H12M6.4 8H10M6.4 10.8H10" stroke="#232627" stroke-width="1.1"/></svg>
<span class="t" style="left:208px;top:741.5px;color:#232627;letter-spacing:0.236px;">Attributes</span>
<svg style="left:290px;top:742px" width="12" height="12" viewBox="0 0 12 12"><path d="M0.6 3.6V0.6H3.8M8.2 0.6H11.4V3.6M11.4 8.2V11.2H8.2M3.8 11.2H0.6V8.2M0.6 5V6.8M11.4 5V6.8" fill="none" stroke="#232627" stroke-width="1.2"/><circle cx="6" cy="3.9" r="1.4" fill="#232627"/><path d="M3.2 9.6 C3.2 5.6 8.8 5.6 8.8 9.6Z" fill="none" stroke="#232627" stroke-width="1.1"/></svg>
<span class="t" style="left:306px;top:741.5px;color:#232627;letter-spacing:0.258px;">Info</span>
<svg style="left:354px;top:741.5px" width="12.4" height="12.6" viewBox="0 0 12.4 12.6"><path d="M0.3 12 C3 12 4 8 6.2 6.2 C8.4 4.4 9.4 0.6 12 0.4" fill="none" stroke="#232627" stroke-width="1.1"/><path d="M1.6 1.8H7.4M3.4 0.4L1.6 1.8L3.4 3.2 M5 10.6H10.8M9 9.2L10.8 10.6L9 12" fill="none" stroke="#232627" stroke-width="1"/><rect x="4.7" y="4.6" width="3.2" height="3.2" fill="#ffffff" stroke="#2f9be0" stroke-width="1"/></svg>
<span class="t" style="left:370px;top:741.5px;color:#232627;letter-spacing:-0.062px;">Tracker</span>
<svg style="left:438.2px;top:742px" width="11.8" height="11.8" viewBox="0 0 11.8 11.8"><circle cx="5.9" cy="5.9" r="5.2" fill="#ffffff" stroke="#232627" stroke-width="1.3"/><path d="M1.6 3.4 C3 1.2 5.2 1 6.6 1.4 C6.8 2.8 5.2 3.2 5 4.4 C5.6 5.2 6.8 5 7 6.2 C6.2 7.6 5.4 7.2 4.6 8.6 C3.6 7.8 3.8 6.6 2.8 6 C1.6 5.6 1.2 4.4 1.6 3.4Z M7.4 6.4 C8.6 5.6 10.2 6 10.8 6.8 C10.8 8.4 9.6 9.8 8.4 10.6 C7.8 9.6 8 8.6 7.4 8 C7 7.4 7 6.8 7.4 6.4Z M8 1.6 C9.2 2 10.2 3 10.6 4.2 C9.6 4.4 8.6 3.8 8 2.8Z" fill="#232627"/></svg>
<span class="t" style="left:454px;top:741.5px;color:#232627;letter-spacing:-0.339px;">Web seeds</span>
<div style="left:530px;top:735px;width:72px;height:27px;background:#dcddde;border:1px solid #b3b5b6;border-radius:3px;"></div>
<svg style="left:540px;top:742px" width="13" height="12" viewBox="0 0 13 12"><circle cx="3.6" cy="3.4" r="2.3" fill="#232627"/><path d="M0 11.4 C0 6.4 7.2 6.4 7.2 11.4Z" fill="#232627"/><path d="M8 1.2H13M8 4.6H13M9 8H13" stroke="#232627" stroke-width="1.2"/></svg>
<span class="t" style="left:556px;top:741.5px;color:#232627;letter-spacing:-0.372px;">Peers</span>
<span class="t" style="left:630px;top:775px;color:#232627;letter-spacing:0.086px;">Torrent DHT:</span>
<span class="t" style="left:711px;top:773.5px;color:#232627;letter-spacing:-0.292px;">376</span>
<div style="left:746px;top:768px;width:1px;height:26px;background:#c8cacb;"></div>
<svg style="left:768px;top:775px" width="13" height="13" viewBox="0 0 13 13"><path d="M1 1 L6.5 6.5 L12 1 M1 6 L6.5 11.5 L12 6" fill="none" stroke="#2f9be0" stroke-width="1.3"/></svg>
<span class="t" style="left:788px;top:775px;color:#2a5d8a;letter-spacing:-0.207px;">0.00 B/s</span>
<svg style="left:894px;top:775px" width="13" height="13" viewBox="0 0 13 13"><path d="M1 6.5 L6.5 1 L12 6.5 M1 11.5 L6.5 6 L12 11.5" fill="none" stroke="#d9566a" stroke-width="1.3"/></svg>
<span class="t" style="left:913.5px;top:775px;color:#232627;letter-spacing:-0.257px;">491.77 KB/s</span>
<div style="left:1033px;top:29px;width:1px;height:769px;background:#5c6064;"></div>
<div style="left:4px;top:801px;width:22px;height:1px;background:#c4c4c4;"></div>
<div style="left:26px;top:801px;width:1004px;height:1px;background:#56595c;"></div>
</div>
</body></html>
